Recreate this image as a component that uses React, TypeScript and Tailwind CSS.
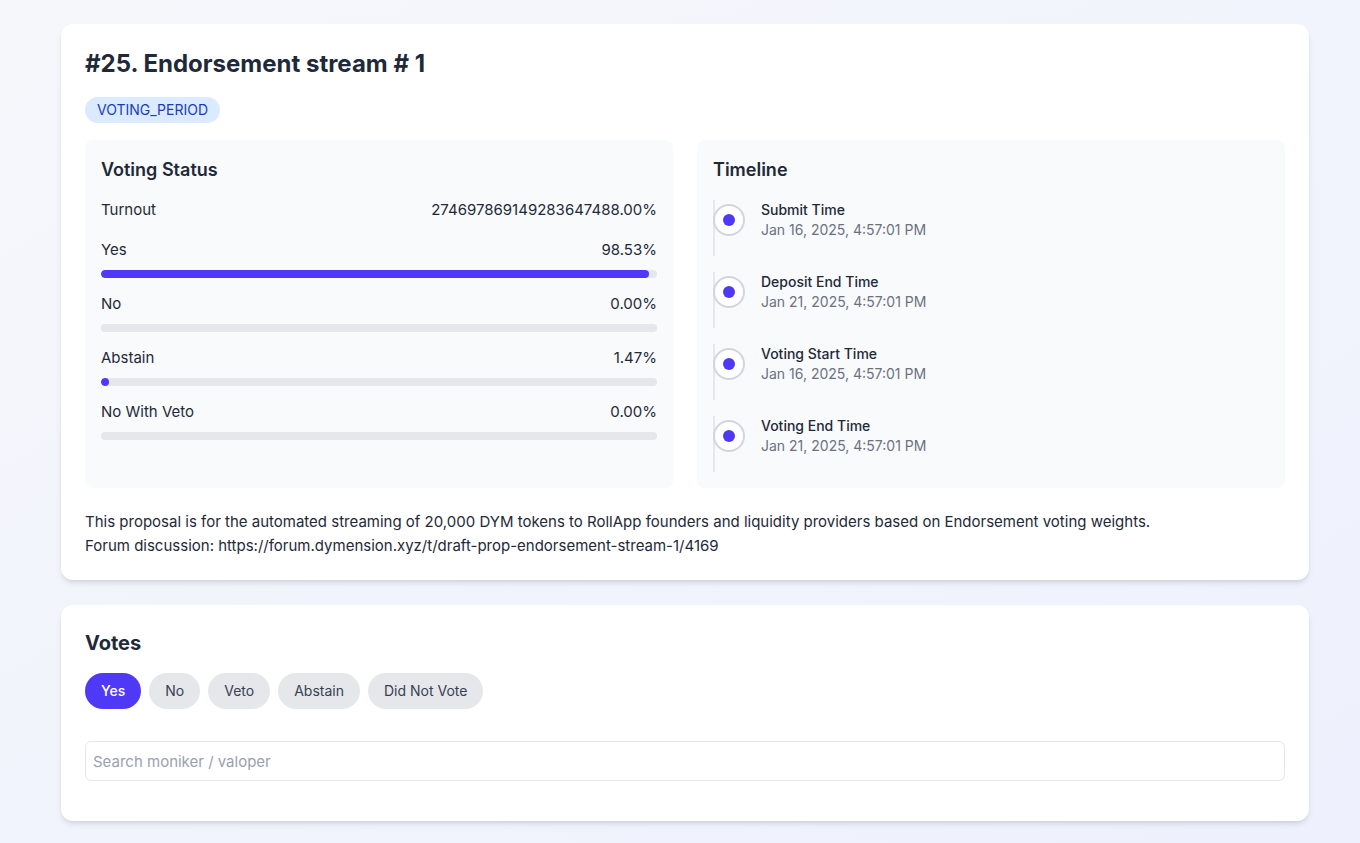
import { useState } from 'react';

const tally = [
  { label: 'Yes', value: 98.53 },
  { label: 'No', value: 0 },
  { label: 'Abstain', value: 1.47 },
  { label: 'No With Veto', value: 0 },
];

const timeline = [
  { label: 'Submit Time', at: 'Jan 16, 2025, 4:57:01 PM' },
  { label: 'Deposit End Time', at: 'Jan 21, 2025, 4:57:01 PM' },
  { label: 'Voting Start Time', at: 'Jan 16, 2025, 4:57:01 PM' },
  { label: 'Voting End Time', at: 'Jan 21, 2025, 4:57:01 PM' },
];

const filters = ['Yes', 'No', 'Veto', 'Abstain', 'Did Not Vote'];

export default function App() {
  const [active, setActive] = useState('Yes');
  const [query, setQuery] = useState('');

  return (
    <div className="min-h-screen bg-gradient-to-br from-[#f5f7fb] to-[#eef1fd] font-['Inter',sans-serif] text-gray-800">
      <div className="ml-[61px] w-[1248px] py-6 flex flex-col gap-[25px]">
        {/* Proposal */}
        <div className="bg-white rounded-xl shadow-md px-6 pt-6 pb-[22px]">
          <h1 className="text-2xl font-bold text-gray-800 leading-8">#25. Endorsement stream # 1</h1>
          <div className="w-fit h-[26px] flex items-center mt-[17px] px-3 rounded-full bg-blue-100 text-blue-800 text-sm">
            VOTING_PERIOD
          </div>

          <div className="grid grid-cols-2 gap-6 mt-[17px]">
            {/* Voting status */}
            <div className="bg-gray-50 rounded-lg p-4">
              <h2 className="text-lg font-semibold leading-7 mb-4">Voting Status</h2>
              <div className="flex justify-between text-[15px] leading-5 mb-5">
                <span>Turnout</span>
                <span>274697869149283647488.00%</span>
              </div>
              <div className="space-y-4">
                {tally.map(t => (
                  <div key={t.label}>
                    <div className="flex justify-between text-[15px] leading-5 mb-[10px]">
                      <span>{t.label}</span>
                      <span>{t.value.toFixed(2)}%</span>
                    </div>
                    <div className="h-2 rounded-full bg-gray-200 overflow-hidden">
                      <div className="h-2 rounded-full bg-indigo-600" style={{ width: `${t.value}%` }} />
                    </div>
                  </div>
                ))}
              </div>
            </div>

            {/* Timeline */}
            <div className="bg-gray-50 rounded-lg p-4">
              <h2 className="text-lg font-semibold leading-7 mb-4">Timeline</h2>
              <div className="space-y-4">
                {timeline.map(t => (
                  <div key={t.label} className="relative border-l-2 border-gray-200 pl-[46px] pb-4">
                    <div className="absolute left-[-2px] top-1 w-8 h-8 rounded-full border-2 border-gray-300 bg-white flex items-center justify-center">
                      <div className="w-3 h-3 rounded-full bg-indigo-600" />
                    </div>
                    <p className="text-sm font-medium leading-5 text-gray-800">{t.label}</p>
                    <p className="text-sm leading-5 text-gray-500">{t.at}</p>
                  </div>
                ))}
              </div>
            </div>
          </div>

          <p className="mt-[22px] text-[15px] leading-6 text-gray-800">
            This proposal is for the automated streaming of 20,000 DYM tokens to RollApp founders and liquidity providers based on Endorsement voting weights.
            <br />
            Forum discussion: https://forum.dymension.xyz/t/draft-prop-endorsement-stream-1/4169
          </p>
        </div>

        {/* Votes */}
        <div className="bg-white rounded-xl shadow-md px-6 pt-6 pb-10">
          <h2 className="text-xl font-bold leading-7 text-gray-800">Votes</h2>
          <div className="flex gap-2 mt-4">
            {filters.map(f => (
              <button
                key={f}
                onClick={() => setActive(f)}
                className={
                  active === f
                    ? 'px-4 py-2 rounded-full text-sm leading-5 font-medium bg-indigo-600 text-white'
                    : 'px-4 py-2 rounded-full text-sm leading-5 bg-gray-200 text-gray-700'
                }
              >
                {f}
              </button>
            ))}
          </div>
          <input
            value={query}
            onChange={e => setQuery(e.target.value)}
            placeholder="Search moniker / valoper"
            className="mt-8 w-full h-10 px-[7px] border border-gray-200 rounded-md text-[15px] placeholder:text-gray-400 outline-none"
          />
        </div>
      </div>
    </div>
  );
}
